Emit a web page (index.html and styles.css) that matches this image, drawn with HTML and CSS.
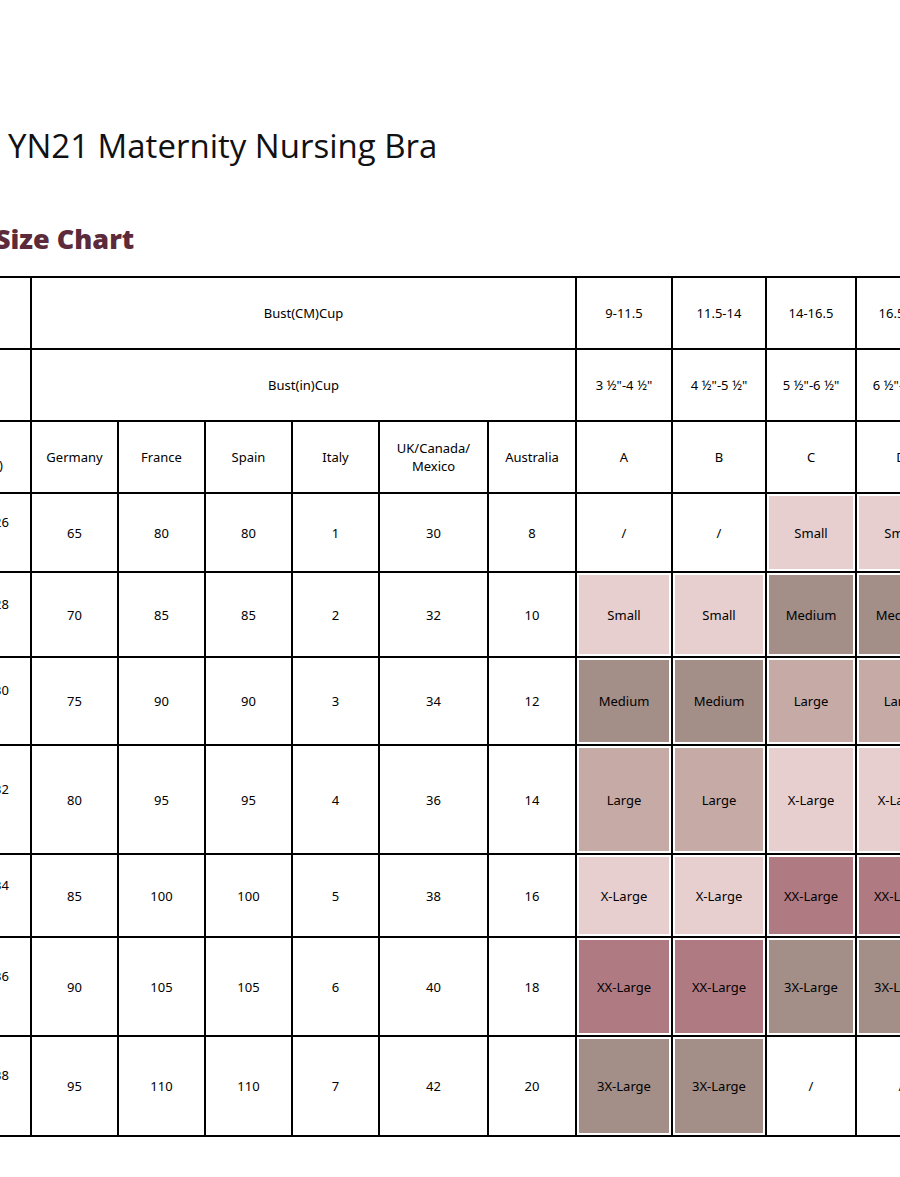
FILE: index.html
```html
<!DOCTYPE html>
<html lang="en">
<head>
    <meta charset="UTF-8">
    <meta name="viewport" content="width=device-width, initial-scale=1.0">
    <link rel="stylesheet" href="styles.css">
    <title>YN21 Maternity Nursing Bra - Size Chart</title>
</head>
<body>

<div class="page">
    <div class="sheet">
        <h1 class="product-title">YN21 Maternity Nursing Bra</h1>
        <h2 class="chart-title">Size Chart</h2>

        <table class="size-table">
            <colgroup>
                <col class="c-band">
                <col class="c-eu"><col class="c-eu"><col class="c-eu"><col class="c-eu">
                <col class="c-uk"><col class="c-au">
                <col class="c-a"><col class="c-b"><col class="c-cd"><col class="c-cd">
            </colgroup>
            <tr class="r-head">
                <td class="band"></td>
                <td colspan="6">Bust(CM)Cup</td>
                <td>9-11.5</td><td>11.5-14</td><td>14-16.5</td><td>16.5-19</td>
            </tr>
            <tr class="r-head">
                <td class="band"></td>
                <td colspan="6">Bust(in)Cup</td>
                <td>3 ½"-4 ½"</td><td>4 ½"-5 ½"</td><td>5 ½"-6 ½"</td><td>6 ½"-7 ½"</td>
            </tr>
            <tr class="r-head">
                <td class="band band-head">Band(in)</td>
                <td>Germany</td><td>France</td><td>Spain</td><td>Italy</td>
                <td>UK/Canada/<br>Mexico</td><td>Australia</td>
                <td>A</td><td>B</td><td>C</td><td>D</td>
            </tr>
            <tr class="r1">
                <td class="band">24-26</td>
                <td>65</td><td>80</td><td>80</td><td>1</td><td>30</td><td>8</td>
                <td>/</td><td>/</td><td class="s-light">Small</td><td class="s-light">Small</td>
            </tr>
            <tr class="r2">
                <td class="band">26-28</td>
                <td>70</td><td>85</td><td>85</td><td>2</td><td>32</td><td>10</td>
                <td class="s-light">Small</td><td class="s-light">Small</td><td class="s-taupe">Medium</td><td class="s-taupe">Medium</td>
            </tr>
            <tr class="r3">
                <td class="band">28-30</td>
                <td>75</td><td>90</td><td>90</td><td>3</td><td>34</td><td>12</td>
                <td class="s-taupe">Medium</td><td class="s-taupe">Medium</td><td class="s-mid">Large</td><td class="s-mid">Large</td>
            </tr>
            <tr class="r4">
                <td class="band">30-32</td>
                <td>80</td><td>95</td><td>95</td><td>4</td><td>36</td><td>14</td>
                <td class="s-mid">Large</td><td class="s-mid">Large</td><td class="s-light">X-Large</td><td class="s-light">X-Large</td>
            </tr>
            <tr class="r5">
                <td class="band">32-34</td>
                <td>85</td><td>100</td><td>100</td><td>5</td><td>38</td><td>16</td>
                <td class="s-light">X-Large</td><td class="s-light">X-Large</td><td class="s-rose">XX-Large</td><td class="s-rose">XX-Large</td>
            </tr>
            <tr class="r6">
                <td class="band">34-36</td>
                <td>90</td><td>105</td><td>105</td><td>6</td><td>40</td><td>18</td>
                <td class="s-rose">XX-Large</td><td class="s-rose">XX-Large</td><td class="s-taupe">3X-Large</td><td class="s-taupe">3X-Large</td>
            </tr>
            <tr class="r7">
                <td class="band">36-38</td>
                <td>95</td><td>110</td><td>110</td><td>7</td><td>42</td><td>20</td>
                <td class="s-taupe">3X-Large</td><td class="s-taupe">3X-Large</td><td>/</td><td>/</td>
            </tr>
        </table>
    </div>
</div>

</body>
</html>
```

FILE: styles.css
```css
body {
    margin: 0;
    padding: 0;
    background-color: #fff;
    font-family: "Noto Sans", Arial, sans-serif;
    color: #000;
}

.page {
    width: 900px;
    overflow: hidden;
}

.sheet {
    margin-left: -70px;
    width: 1070px;
}

.product-title {
    margin: 0;
    padding: 124px 0 0 78px;
    font-family: "Open Sans", Arial, sans-serif;
    font-size: 33px;
    font-weight: 500;
    line-height: 44px;
    color: #111;
}

.chart-title {
    margin: 0;
    padding: 54px 0 0 65px;
    font-family: "Open Sans", Arial, sans-serif;
    font-size: 27px;
    font-weight: 800;
    line-height: 34px;
    color: #5c2a3b;
}

.size-table {
    margin-top: 20px;
    border-collapse: collapse;
    table-layout: fixed;
    width: 1015px;
    font-size: 13px;
}

.size-table td {
    border: 2px solid #000;
    text-align: center;
    vertical-align: middle;
    padding: 0;
    line-height: 18px;
}

.c-band { width: 100px; }
.c-eu { width: 87px; }
.c-uk { width: 109px; }
.c-au { width: 88px; }
.c-a { width: 96px; }
.c-b { width: 94px; }
.c-cd { width: 90px; }

.r-head { height: 72px; }
.r1 { height: 79px; }
.r2 { height: 85px; }
.r3 { height: 88px; }
.r4 { height: 109px; }
.r5 { height: 83px; }
.r6 { height: 99px; }
.r7 { height: 100px; }

.size-table .band {
    text-align: right;
    padding: 0 21px 22px 0;
}

.size-table .band-head {
    white-space: nowrap;
    padding: 16px 27px 0 0;
}

/* colored size cells keep a thin white edge inside the lines */
.s-light, .s-taupe, .s-mid, .s-rose {
    box-shadow: inset 0 0 0 2px #fff;
}

.s-light { background-color: #e8cfcf; }
.s-taupe { background-color: #a38e88; }
.s-mid { background-color: #c6aaa5; }
.s-rose { background-color: #b07a83; }
```
